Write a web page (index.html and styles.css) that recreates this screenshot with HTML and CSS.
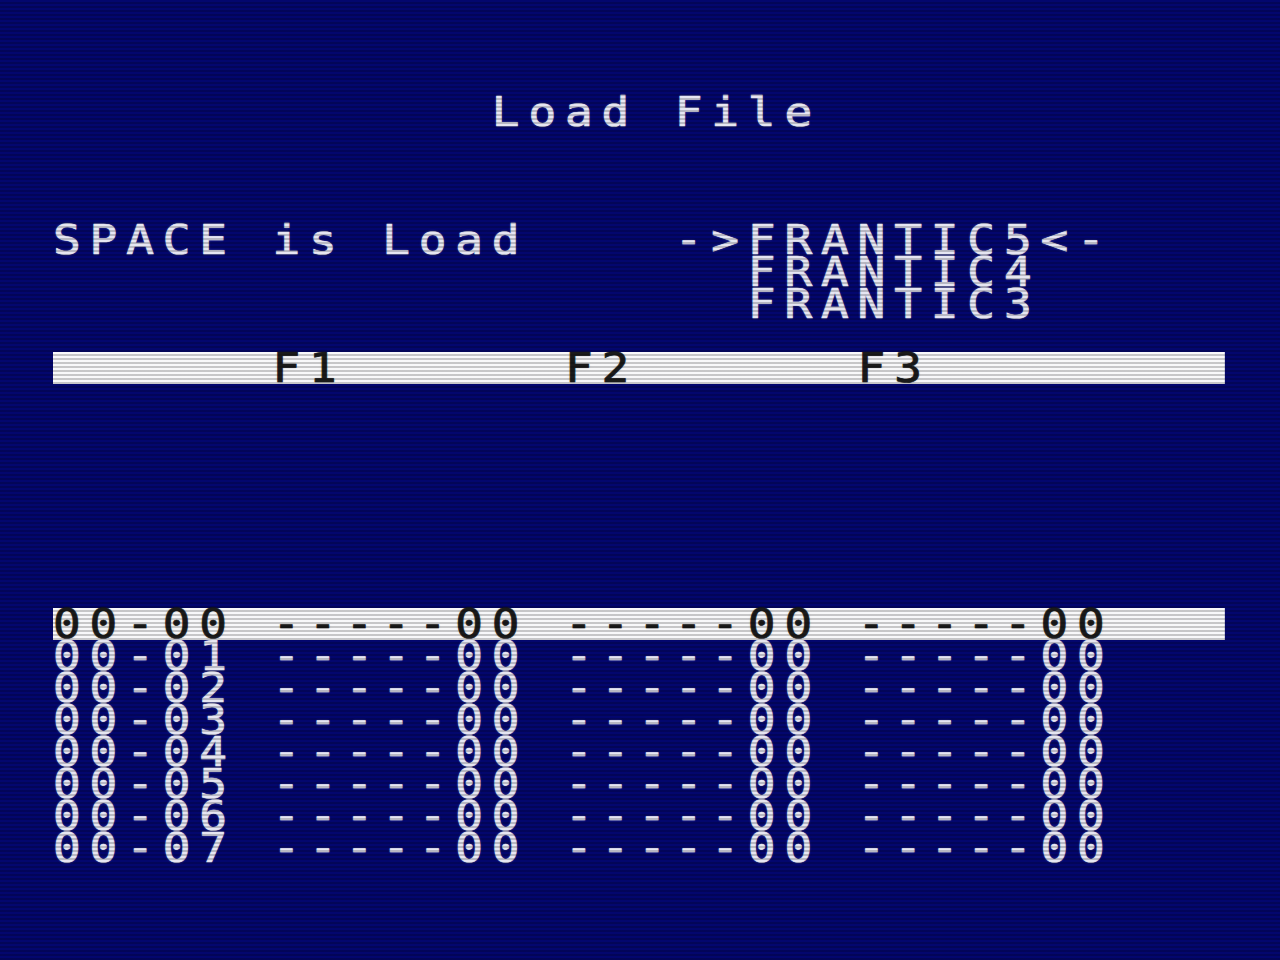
FILE: index.html
```html
<!DOCTYPE html>
<html lang="en">
<head>
<meta charset="utf-8">
<title>Load File</title>
<link rel="stylesheet" href="styles.css">
</head>
<body>
<div class="screen">
  <div class="line title">            Load File</div>
  <div class="files">
    <div class="line">SPACE is Load    -&gt;FRANTIC5&lt;-</div>
    <div class="line">                   FRANTIC4</div>
    <div class="line">                   FRANTIC3</div>
  </div>
  <div class="line bar">      F1      F2      F3</div>
  <div class="table">
    <div class="line bar">00-00 -----00 -----00 -----00</div>
    <div class="line">00-01 -----00 -----00 -----00</div>
    <div class="line">00-02 -----00 -----00 -----00</div>
    <div class="line">00-03 -----00 -----00 -----00</div>
    <div class="line">00-04 -----00 -----00 -----00</div>
    <div class="line">00-05 -----00 -----00 -----00</div>
    <div class="line">00-06 -----00 -----00 -----00</div>
    <div class="line">00-07 -----00 -----00 -----00</div>
  </div>
  <div class="scanlines"></div>
</div>
</body>
</html>
```

FILE: styles.css
```css
html, body {
  margin: 0;
  padding: 0;
  background: #03066e;
}

.screen {
  position: relative;
  width: 1280px;
  height: 960px;
  overflow: hidden;
  background: #03066e;
  padding: 96px 0 0 53px;
  box-sizing: border-box;
  font-family: "DejaVu Sans Mono", "Liberation Mono", monospace;
  font-size: 40px;
  font-variant-numeric: slashed-zero;
  color: #e6e6f2;
}

.line {
  height: 32px;
  line-height: 32px;
  white-space: pre;
  letter-spacing: 7.72px;
  transform: scaleX(1.15);
  transform-origin: 0 0;
  -webkit-text-stroke: 0.7px currentColor;
  text-shadow: 0 0 2px rgba(220, 220, 255, 0.55);
}

.files {
  margin-top: 96px;
}

.bar {
  width: 1019.13px;
  background: #f8f8fa;
  color: #1a1a1a;
  text-shadow: 0 0 2px rgba(0, 0, 0, 0.35);
}

.files + .bar {
  margin-top: 32px;
}

.table {
  margin-top: 224px;
}

.scanlines {
  position: absolute;
  inset: 0;
  pointer-events: none;
  background: repeating-linear-gradient(
    to bottom,
    rgba(0, 0, 0, 0) 0px,
    rgba(0, 0, 0, 0) 2px,
    rgba(0, 0, 0, 0.2) 2px,
    rgba(0, 0, 0, 0.2) 4px
  );
}
```
